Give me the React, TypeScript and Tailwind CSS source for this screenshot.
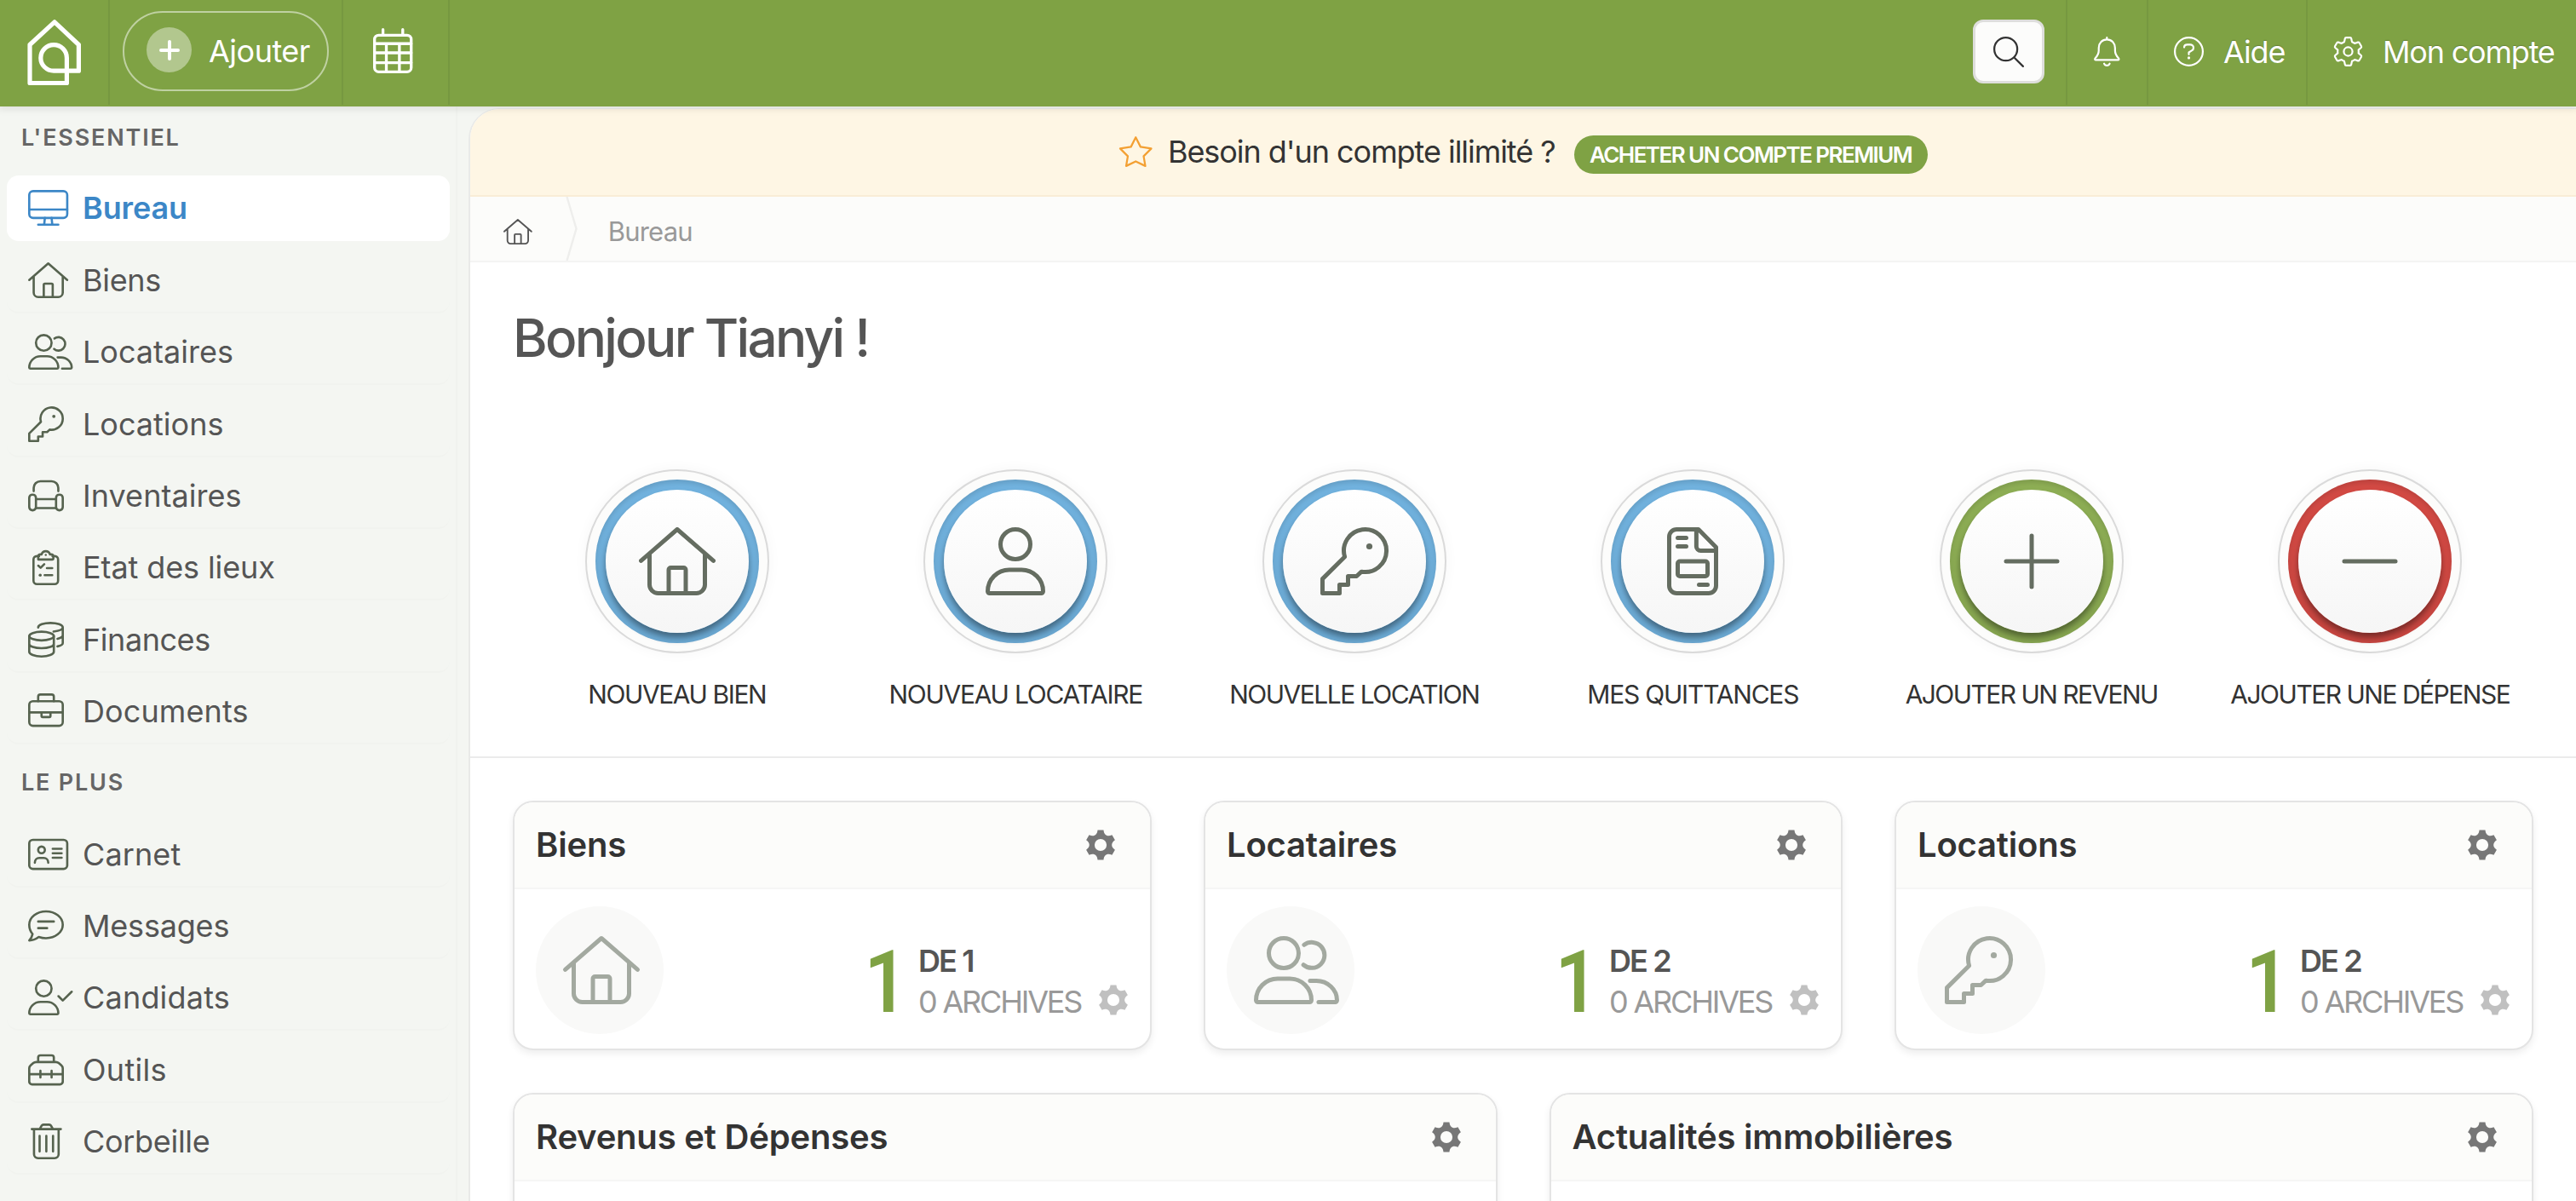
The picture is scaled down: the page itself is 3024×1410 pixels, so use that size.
import type { ReactNode } from 'react'

// Every icon is drawn on a 512-unit high grid with 32-unit strokes
const ICONS: Record<string, { w: number; body: ReactNode }> = {
  desktop: {
    w: 576,
    body: (
      <>
        <rect x="16" y="16" width="544" height="384" rx="56" />
        <path d="M16 280H560M240 400L230 496M336 400L346 496M144 496H432" />
      </>
    ),
  },
  home: {
    w: 576,
    body: (
      <path d="M16 252L288 16L560 252M80 200V432a64 64 0 0 0 64 64H432a64 64 0 0 0 64-64V200M224 496V320a16 16 0 0 1 16-16h96a16 16 0 0 1 16 16V496" />
    ),
  },
  users: {
    w: 640,
    body: (
      <>
        <circle cx="224" cy="128" r="112" />
        <path d="M178 320h92c90 0 162 72 162 162 0 8-6 14-14 14H30c-8 0-14-6-14-14 0-90 72-162 162-162ZM377 66A96 96 0 1 1 372 216M422 336h48c85 0 154 66 154 146 0 8-6 14-14 14H486" />
      </>
    ),
  },
  user: {
    w: 448,
    body: (
      <>
        <circle cx="224" cy="128" r="112" />
        <path d="M178 320h92c90 0 162 72 162 162 0 8-6 14-14 14H30c-8 0-14-6-14-14 0-90 72-162 162-162Z" />
      </>
    ),
  },
  userCheck: {
    w: 640,
    body: (
      <>
        <circle cx="224" cy="128" r="112" />
        <path d="M178 320h92c90 0 162 72 162 162 0 8-6 14-14 14H30c-8 0-14-6-14-14 0-90 72-162 162-162ZM434 238L496 300L624 174" />
      </>
    ),
  },
  key: {
    w: 512,
    body: (
      <>
        <path d="M183 222A160 160 0 1 1 309 334L272 368H208V432H144V496H16V388Z" />
        <circle cx="368" cy="144" r="23" fill="currentColor" stroke="none" />
      </>
    ),
  },
  couch: {
    w: 512,
    body: (
      <>
        <path d="M80 190V144a96 96 0 0 1 96-96H336a96 96 0 0 1 96 96v46M112 304H400M112 432H400" />
        <rect x="16" y="240" width="96" height="224" rx="46" />
        <rect x="400" y="240" width="96" height="224" rx="46" />
      </>
    ),
  },
  clipboard: {
    w: 384,
    body: (
      <>
        <path d="M96 96H64a48 48 0 0 0-48 48V448a48 48 0 0 0 48 48H320a48 48 0 0 0 48-48V144a48 48 0 0 0-48-48H288M84 144V104a32 32 0 0 1 32-32h16a62 62 0 0 1 120 0h16a32 32 0 0 1 32 32v24a16 16 0 0 1-16 16H100a16 16 0 0 1-16-16M84 232l34 32 52-52M208 268h76M176 368h108" />
        <circle cx="192" cy="80" r="15" fill="currentColor" stroke="none" />
        <circle cx="112" cy="368" r="22" fill="currentColor" stroke="none" />
      </>
    ),
  },
  coins: {
    w: 512,
    body: (
      <>
        <ellipse cx="192" cy="204" rx="176" ry="62" />
        <path d="M16 204V430c0 36 78 66 176 66s176-30 176-66V204M16 316c0 36 78 62 176 62s176-26 176-62M144 82c0-38 80-66 176-66s176 28 176 64c0 30-54 52-132 60M496 80V304c0 20-30 38-76 48M496 192c0 22-30 40-76 52" />
      </>
    ),
  },
  briefcase: {
    w: 512,
    body: (
      <>
        <rect x="16" y="112" width="480" height="352" rx="52" />
        <path d="M144 112V48a32 32 0 0 1 32-32H336a32 32 0 0 1 32 32v64M16 272H496M192 272v52a16 16 0 0 0 16 16h96a16 16 0 0 0 16-16v-52" />
      </>
    ),
  },
  card: {
    w: 576,
    body: (
      <>
        <rect x="16" y="48" width="544" height="416" rx="52" />
        <circle cx="192" cy="192" r="48" />
        <path d="M96 376c0-40 26-68 64-68h64c38 0 64 28 64 68M352 176H480M352 240H480M352 304H480" />
      </>
    ),
  },
  message: {
    w: 512,
    body: (
      <path d="M256 48C388 48 496 134 496 240S388 432 256 432c-38 0-72-7-104-18-30 22-78 50-136 50 26-26 42-58 48-92C34 337 16 290 16 240 16 134 124 48 256 48ZM144 194H368M144 288H272" />
    ),
  },
  toolbox: {
    w: 512,
    body: (
      <path d="M144 136V80a32 32 0 0 1 32-32H336a32 32 0 0 1 32 32v56M116 144H396c18 0 30 4 42 15l38 34c14 13 20 24 20 42V424a40 40 0 0 1-40 40H56a40 40 0 0 1-40-40V235c0-18 6-29 20-42l38-34c12-11 24-15 42-15ZM16 318H496M176 270v96M336 270v96" />
    ),
  },
  trash: {
    w: 448,
    body: (
      <path d="M16 80H432M132 76l26-46c6-10 12-14 24-14h84c12 0 18 4 24 14l26 46M48 80V440a56 56 0 0 0 56 56H344a56 56 0 0 0 56-56V80M128 176V400M224 176V400M320 176V400" />
    ),
  },
  receipt: {
    w: 384,
    body: (
      <path d="M236 16H72a56 56 0 0 0-56 56V440a56 56 0 0 0 56 56H312a56 56 0 0 0 56-56V150ZM220 20V144a32 32 0 0 0 32 32H366M80 80h64M80 144h64M304 432h-64M96 256H288a16 16 0 0 1 16 16v80a16 16 0 0 1-16 16H96a16 16 0 0 1-16-16V272a16 16 0 0 1 16-16Z" />
    ),
  },
  plus: { w: 448, body: <path d="M224 64V448M32 256H416" /> },
  minus: { w: 448, body: <path d="M32 256H416" /> },
  calendar: {
    w: 448,
    body: (
      <>
        <rect x="16" y="80" width="416" height="416" rx="48" />
        <path d="M112 16V80M336 16V80M16 176H432M16 280H432M16 392H432M150 176V496M298 176V496" />
      </>
    ),
  },
  search: { w: 512, body: <path d="M208 16a192 192 0 1 0 0 384a192 192 0 1 0 0-384M344 344L496 496" /> },
  bell: {
    w: 448,
    body: (
      <path d="M224 16V48M224 48C140 48 84 112 84 192v44c0 50-18 88-56 128-18 20-14 36 10 36H410c24 0 28-16 10-36-38-40-56-78-56-128v-44C364 112 308 48 224 48ZM176 464c8 20 26 32 48 32s40-12 48-32" />
    ),
  },
  help: {
    w: 512,
    body: (
      <>
        <circle cx="256" cy="256" r="240" />
        <path d="M176 184c0-30 24-48 54-48h48c32 0 58 24 58 56 0 22-12 38-30 48l-50 30v34" />
        <circle cx="256" cy="364" r="24" fill="currentColor" stroke="none" />
      </>
    ),
  },
  gear: {
    w: 512,
    body: (
      <>
        <path d="M222 16h68c12 0 18 6 20 16l12 58c16 6 32 15 46 26l56-19c10-3 19 0 24 9l34 59c5 9 3 18-4 25l-44 39a170 170 0 0 1 0 54l44 39c7 7 9 16 4 25l-34 59c-5 9-14 12-24 9l-56-19c-14 11-30 20-46 26l-12 58c-2 10-8 16-20 16h-68c-12 0-18-6-20-16l-12-58c-16-6-32-15-46-26l-56 19c-10 3-19 0-24-9l-34-59c-5-9-3-18 4-25l44-39a170 170 0 0 1 0-54l-44-39c-7-7-9-16-4-25l34-59c5-9 14-12 24-9l56 19c14-11 30-20 46-26l12-58c2-10 8-16 20-16Z" />
        <circle cx="256" cy="256" r="74" />
      </>
    ),
  },
  star: {
    w: 576,
    body: (
      <path d="M288 18L368 176L548 204L420 332L448 496L288 418L128 496L156 332L28 204L208 176Z" />
    ),
  },
}

function Icon({ name, size, className = '' }: { name: string; size: number; className?: string }) {
  const { w, body } = ICONS[name]
  return (
    <svg
      width={(size * w) / 512}
      height={size}
      viewBox={`0 0 ${w} 512`}
      fill="none"
      stroke="currentColor"
      strokeWidth="32"
      strokeLinecap="round"
      strokeLinejoin="round"
      className={`shrink-0 overflow-visible ${className}`}
    >
      {body}
    </svg>
  )
}

function SolidGear({ className = '' }: { className?: string }) {
  return (
    <svg width="36" height="36" viewBox="-18 -18 36 36" className={`shrink-0 ${className}`}>
      <path
        fill="currentColor"
        fillRule="evenodd"
        d="M-3.5-17.5H3.5C4-11.5 7.96-9.21 13.41-11.78L16.91-5.72C11.96-2.29 11.96 2.29 16.91 5.72L13.41 11.78C7.96 9.21 4 11.5 3.5 17.5H-3.5C-4 11.5-7.96 9.21-13.41 11.78L-16.91 5.72C-11.96 2.29-11.96-2.29-16.91-5.72L-13.41-11.78C-7.96-9.21-4-11.5-3.5-17.5ZM0-7.1A7.1 7.1 0 1 0 0 7.1A7.1 7.1 0 1 0 0-7.1Z"
      />
    </svg>
  )
}

interface NavItem {
  icon: string
  label: string
  tracking: string
  active?: boolean
}

const essentiel: NavItem[] = [
  { icon: 'desktop', label: 'Bureau', tracking: 'tracking-[-0.1px]', active: true },
  { icon: 'home', label: 'Biens', tracking: 'tracking-[-0.3px]' },
  { icon: 'users', label: 'Locataires', tracking: 'tracking-[0px]' },
  { icon: 'key', label: 'Locations', tracking: 'tracking-[0px]' },
  { icon: 'couch', label: 'Inventaires', tracking: 'tracking-[0.05px]' },
  { icon: 'clipboard', label: 'Etat des lieux', tracking: 'tracking-[-0.1px]' },
  { icon: 'coins', label: 'Finances', tracking: 'tracking-[-0.45px]' },
  { icon: 'briefcase', label: 'Documents', tracking: 'tracking-[0.1px]' },
]

const plus: NavItem[] = [
  { icon: 'card', label: 'Carnet', tracking: 'tracking-[0.1px]' },
  { icon: 'message', label: 'Messages', tracking: 'tracking-[-0.2px]' },
  { icon: 'userCheck', label: 'Candidats', tracking: 'tracking-[0.2px]' },
  { icon: 'toolbox', label: 'Outils', tracking: 'tracking-[0.3px]' },
  { icon: 'trash', label: 'Corbeille', tracking: 'tracking-[-0.3px]' },
]

const actions = [
  { icon: 'home', label: 'NOUVEAU BIEN', ring: 'bg-[#73b5e2]', tracking: 'tracking-[-1.4px]' },
  { icon: 'user', label: 'NOUVEAU LOCATAIRE', ring: 'bg-[#73b5e2]', tracking: 'tracking-[-1.25px]' },
  { icon: 'key', label: 'NOUVELLE LOCATION', ring: 'bg-[#73b5e2]', tracking: 'tracking-[-1.5px]' },
  { icon: 'receipt', label: 'MES QUITTANCES', ring: 'bg-[#73b5e2]', tracking: 'tracking-[-1.2px]' },
  { icon: 'plus', label: 'AJOUTER UN REVENU', ring: 'bg-[#90b156]', tracking: 'tracking-[-1.55px]' },
  { icon: 'minus', label: 'AJOUTER UNE DÉPENSE', ring: 'bg-[#d64b45]', tracking: 'tracking-[-1.5px]' },
]

const stats = [
  { icon: 'home', title: 'Biens', total: 'DE 1' },
  { icon: 'users', title: 'Locataires', total: 'DE 2' },
  { icon: 'key', title: 'Locations', total: 'DE 2' },
]

function NavList({ items }: { items: NavItem[] }) {
  return (
    <ul>
      {items.map((item) => (
        <li key={item.label} className="flex h-[84.4px] items-end pr-[7px] pl-2">
          <a
            className={`flex h-[77px] w-full items-center rounded-[14px] border-b-2 pt-px pl-[25px] text-[36px] ${
              item.active
                ? 'border-white bg-white font-semibold text-[#3c87c7]'
                : 'border-[#f1f3ef] text-[#555]'
            }`}
          >
            <span className={`flex w-[64px] shrink-0 ${item.active ? '' : 'text-[#56634f]'}`}>
              <span className="flex min-w-[42px] justify-center">
                <Icon name={item.icon} size={42} />
              </span>
            </span>
            <span className={`whitespace-nowrap ${item.tracking}`}>{item.label}</span>
          </a>
        </li>
      ))}
    </ul>
  )
}

function Card({ title, children }: { title: string; children?: ReactNode }) {
  return (
    <section className="overflow-hidden rounded-[24px] border-2 border-[#e4e4e4] bg-white shadow-[0_4px_8px_rgba(0,0,0,0.07)]">
      <div className="flex h-[102px] items-center justify-between border-b-2 border-[#f6f6f5] bg-[#fcfcfa] pr-[40px] pl-[25px]">
        <h2 className="text-[40px] font-semibold tracking-[-0.2px] text-[#333]">{title}</h2>
        <SolidGear className="text-[#777]" />
      </div>
      {children}
    </section>
  )
}

export default function App() {
  return (
    <div className="flex h-[1410px] w-full flex-col overflow-hidden bg-[#f4f6f2] font-['Inter',sans-serif]">
      <header className="relative z-10 h-[125px] shrink-0 bg-[#7fa244] text-[36px] text-white shadow-[0_2px_8px_2px_rgba(0,0,0,0.08)] [text-shadow:0_-1px_1px_rgba(0,0,0,0.2)]">
        <div className="flex h-[123px]">
          <div className="flex w-[129px] items-center border-r-2 border-[#769840] pl-8">
            <svg width="64" height="78" viewBox="32 23 64 78" fill="none" stroke="white" strokeWidth="5.2" strokeLinejoin="round">
              <path d="M78.4 68V97.5H35V52.5L64 25.8L92.4 52.5V83.2H63.2A15.3 15.3 0 1 1 78.4 68" />
            </svg>
          </div>
          <div className="flex w-[274px] items-center border-r-2 border-[#769840] pb-[3px] pl-[15px]">
            <button className="flex h-[94px] w-[242px] items-center rounded-full border-2 border-white/50 pl-[26px]">
              <span className="mb-[3px] flex h-[53px] w-[53px] items-center justify-center rounded-full bg-white/40">
                <svg width="24" height="24" viewBox="0 0 24 24" stroke="white" strokeWidth="4" strokeLinecap="round">
                  <path d="M12 2V22M2 12H22" />
                </svg>
              </span>
              <span className="ml-[20px] tracking-[-0.5px]">Ajouter</span>
            </button>
          </div>
          <div className="flex w-[125px] items-center border-r-2 border-[#769840] pb-[4px] pl-[35px]">
            <Icon name="calendar" size={53} />
          </div>
          <div className="flex flex-1 items-center justify-end border-r-2 border-[#769840] pr-[25px] pb-[2px]">
            <button className="flex h-[75px] w-[84px] items-center justify-center rounded-[12px] border-[3px] border-[#dededc] bg-[#fcfcfb] text-[#333]">
              <Icon name="search" size={36} />
            </button>
          </div>
          <div className="flex w-[95px] items-center justify-center border-r-2 border-[#769840] pb-[2px]">
            <Icon name="bell" size={35} />
          </div>
          <div className="flex w-[187px] items-center border-r-2 border-[#769840] pb-[2px] pl-[30px]">
            <Icon name="help" size={35} />
            <span className="ml-[23px] tracking-[-1.1px]">Aide</span>
          </div>
          <div className="flex w-[315px] items-center pb-[2px] pl-[30px]">
            <Icon name="gear" size={35} />
            <span className="ml-[23px] tracking-[-1.2px] whitespace-nowrap">Mon compte</span>
          </div>
        </div>
      </header>

      <div className="flex flex-1">
        <aside className="w-[537px] shrink-0 border-r-2 border-[#f0f2ee]">
          <h3 className="flex h-[74px] items-center pl-[25px] text-[27px] font-semibold tracking-[1.8px] text-[#666]">
            L'ESSENTIEL
          </h3>
          <NavList items={essentiel} />
          <h3 className="flex h-[83px] items-center pt-2 pl-[25px] text-[27px] font-semibold tracking-[1.8px] text-[#666]">
            LE PLUS
          </h3>
          <NavList items={plus} />
        </aside>

        <main className="mt-[2px] ml-[13px] flex-1 overflow-hidden rounded-tl-[36px] border-t border-l-2 border-[#e9eae8] bg-white">
          <div className="flex h-[103px] items-center justify-center border-b-2 border-[#f9edd6] bg-[#fef6e4]">
            <Icon name="star" size={36} className="mb-px text-[#f3a033]" />
            <span className="mb-px ml-[17px] text-[36px] tracking-[-1.05px] text-[#333]">Besoin d'un compte illimité ?</span>
            <span className="mt-[6px] ml-[22px] flex h-[45px] w-[415px] items-center justify-center rounded-full bg-[#7fa244] text-[26px] font-semibold tracking-[-1.55px] text-white">
              ACHETER UN COMPTE PREMIUM
            </span>
          </div>

          <div className="flex h-[77px] items-center border-b-2 border-[#f4f4f3] bg-[#fcfcfa]">
            <Icon name="home" size={30} className="mt-[7px] ml-[39px] text-[#555]" />
            <svg width="14" height="75" viewBox="0 0 14 75" fill="none" stroke="#eeeeec" strokeWidth="2.4" className="ml-[39px]">
              <path d="M1.5 0L12.5 37.5L1.5 75" />
            </svg>
            <span className="mt-[7px] ml-[36px] text-[31px] tracking-[-0.8px] text-[#999]">Bureau</span>
          </div>

          <h1 className="mt-[51px] ml-[50px] text-[62px] leading-[76px] font-medium tracking-[-2.7px] text-[#555]">
            Bonjour Tianyi !
          </h1>

          <div className="mt-[116px] ml-[44px] grid h-[337px] w-[2385px] grid-cols-6">
            {actions.map((action) => (
              <div key={action.label} className="flex flex-col items-center">
                <div className="rounded-full border-2 border-[#dadada] bg-[#fcfcfb] p-[10px] shadow-[0_0_16px_rgba(0,0,0,0.04)]">
                  <div
                    className={`rounded-full p-[12px] shadow-[inset_0_2px_10px_rgba(0,0,0,0.18)] ${action.ring}`}
                  >
                    <div className="flex h-[168px] w-[168px] items-center justify-center rounded-full bg-linear-to-b from-white to-[#f6f6f6] text-[#656d61] shadow-[0_6px_8px_rgba(0,0,0,0.45)]">
                      <Icon name={action.icon} size={80} className="drop-shadow-[0_2px_0_#fff]" />
                    </div>
                  </div>
                </div>
                <span className={`mt-[29px] text-[30px] leading-[38px] whitespace-nowrap text-[#333] ${action.tracking}`}>
                  {action.label}
                </span>
              </div>
            ))}
          </div>

          <div className="border-t-2 border-[#ebebeb] px-[50px] pt-[50px]">
            <div className="grid grid-cols-3 gap-[61px]">
              {stats.map((stat) => (
                <Card key={stat.title} title={stat.title}>
                  <div className="flex h-[187px] pr-[25px] pl-[25px]">
                    <div className="mt-[20px] flex h-[150px] w-[150px] shrink-0 items-center rounded-full bg-[#f9f9f8] pl-[32px] text-[#a3a9a0]">
                      <Icon name={stat.icon} size={80} />
                    </div>
                    <div className="ml-auto flex">
                      <span className="mt-[49px] origin-right scale-x-[0.87] font-['Roboto'] text-[102px] leading-[120px] font-semibold text-[#7fa244]">
                        1
                      </span>
                      <div className="ml-[13px] w-[247px] pt-[60px] text-[36px] leading-[48px]">
                        <div className="font-semibold tracking-[-1.9px] text-[#555]">{stat.total}</div>
                        <div className="flex items-center justify-between text-[#999]">
                          <span className="tracking-[-2.2px] whitespace-nowrap">0 ARCHIVES</span>
                          <SolidGear className="mb-[4px] text-[#c0c0c0]" />
                        </div>
                      </div>
                    </div>
                  </div>
                </Card>
              ))}
            </div>
            <div className="mt-[50px] grid grid-cols-2 gap-[61px]">
              <Card title="Revenus et Dépenses">
                <div className="h-[300px]" />
              </Card>
              <Card title="Actualités immobilières">
                <div className="h-[300px]" />
              </Card>
            </div>
          </div>
        </main>
      </div>
    </div>
  )
}
